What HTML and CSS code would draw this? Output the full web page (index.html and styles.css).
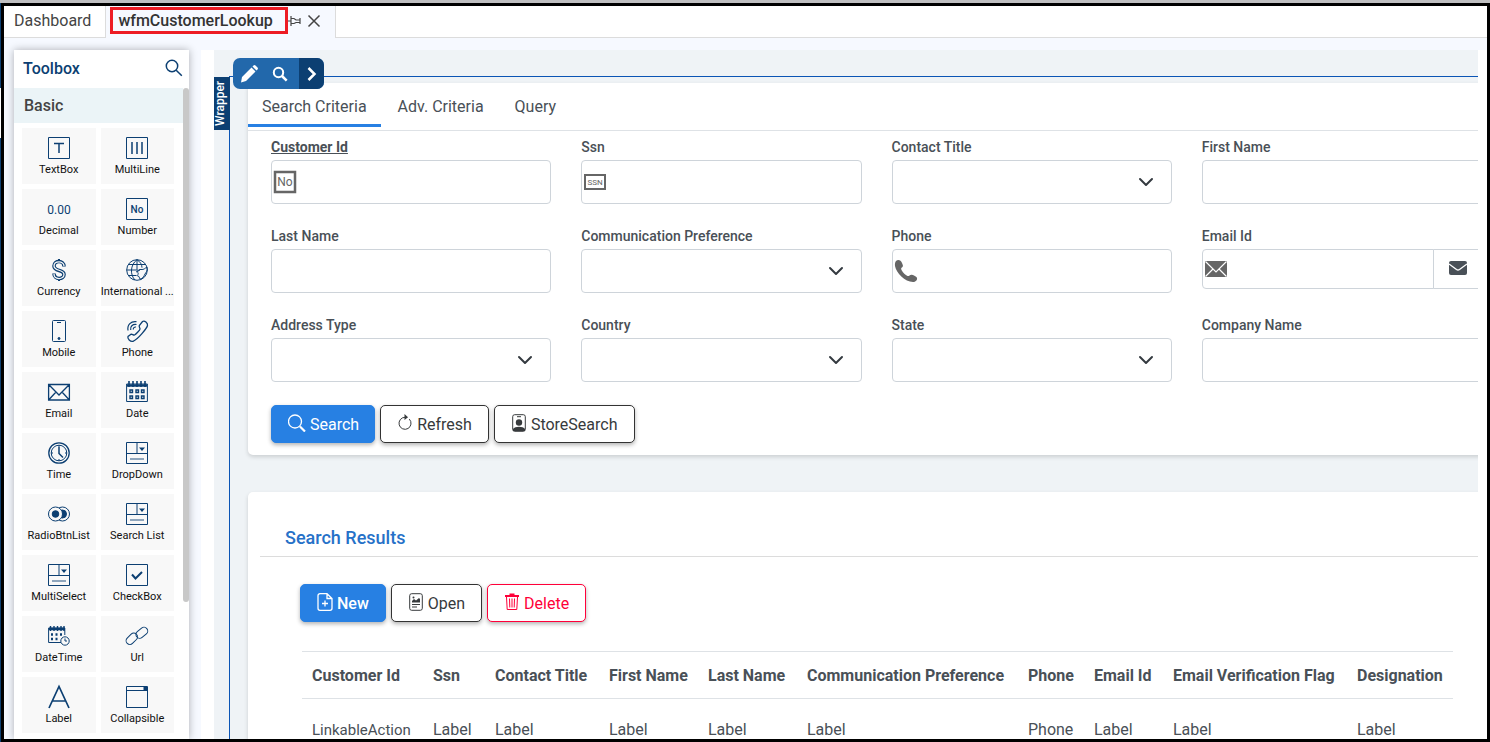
FILE: index.html
```html
<!DOCTYPE html>
<html lang="en">
<head>
    <meta charset="UTF-8">
    <meta name="viewport" content="width=device-width, initial-scale=1.0">
    <title>wfmCustomerLookup</title>
    <link rel="stylesheet" href="styles.css">
</head>
<body>
    <svg class="defs" aria-hidden="true">
        <symbol id="icon-dropdown" viewBox="0 0 22 22">
            <path d="M.5.5h21v21H.5zM.5 11.500h21M11 .5v11"/>
            <path d="M13 5.500h6l-3 3.500z" fill="currentColor" stroke="none"/>
            <path d="M4 17h14" stroke-width="1.500" opacity=".6"/>
        </symbol>
    </svg>

    <div class="app">
        <nav class="tabbar">
            <a class="doc-tab" href="#">Dashboard</a>
            <div class="doc-tab active">
                <a class="doc-name" href="#">wfmCustomerLookup</a>
                <button class="icon-btn" aria-label="Pin"><svg width="14" height="12" viewBox="0 0 14 12"><path d="M0 6h3M3 1v10M3 3.500h3l2 1.500h4V3M12 3v6M3 8.500h3l2-1h4" /></svg></button>
                <button class="icon-btn close" aria-label="Close"><svg width="14" height="14" viewBox="0 0 14 14"><path d="M1.500 1.500l11 11M12.500 1.500l-11 11"/></svg></button>
            </div>
        </nav>

        <div class="workspace">
            <aside class="toolbox">
                <div class="toolbox-header">
                    <h2>Toolbox</h2>
                    <button class="icon-btn" aria-label="Search toolbox"><svg width="18" height="18" viewBox="0 0 18 18"><circle cx="7" cy="7" r="5.700"/><path d="M11.200 11.200l5.600 5.600"/></svg></button>
                </div>
                <div class="toolbox-body">
                    <div class="toolbox-list">
                        <h3>Basic</h3>
                        <div class="tools">
                            <div class="tool"><svg viewBox="0 0 22 22"><path d="M.5.5h21v21H.5z"/><path d="M6 6.500h10M11 6.500V16" stroke-width="1.500"/></svg>TextBox</div>
                            <div class="tool"><svg viewBox="0 0 22 22"><path d="M.5.5h21v21H.5z"/><path d="M6 5v12M11 5v12M16 5v12" stroke-width="1.500"/></svg>MultiLine</div>
                            <div class="tool"><svg viewBox="0 0 22 22"><text x="11" y="16" class="num">0.00</text></svg>Decimal</div>
                            <div class="tool"><svg viewBox="0 0 22 22"><path d="M.5.5h21v21H.5z"/><text x="11" y="15" class="no">No</text></svg>Number</div>
                            <div class="tool"><svg viewBox="0 0 22 22"><path d="M11 0v3M11 19v3" stroke-width="2"/><path d="M16 7.500C16 1 6 1 6 7s10 3 10 8.500S6 21 6 14.500" stroke-width="3.600"/><path d="M16 7C16 1.500 6 1.500 6 7s10 3 10 8.500S6 21 6 15" stroke="#f8f8f8" stroke-width="1.300"/></svg>Currency</div>
                            <div class="tool"><svg viewBox="0 0 22 22"><circle cx="11" cy="11" r="10.300"/><path d="M11 .7v10M.7 11h11M2.500 5.500h17M2.500 16.500h8M11 .7C4 6 4 16 9 21M11 .7c3 2 5 4.500 5 8"/><path d="M21 8c-2 1-3 3-6 2.500s-4 2-3 3.500-2 3 0 3 1 4 3 3 3-3 4-5 3-3 2-7zM10 13l4-2"/></svg><span>International ...</span></div>
                            <div class="tool"><svg viewBox="0 0 22 22"><rect x="4.500" y=".5" width="13" height="21" rx="1"/><path d="M9 2.500h4"/><circle cx="11" cy="18.500" r="1" fill="currentColor"/></svg>Mobile</div>
                            <div class="tool"><svg viewBox="0 0 22 22"><path d="M16.500 1.500c2-1.500 5.500 1.500 5 4S12 19.500 7 21.300c-2.500.7-6-2.500-5-4.800l3-2.300c1-.5 2.500 1.300 3.500.8s5.500-5 5.500-6-1.200-2-.7-3.500z" stroke-width="1.300"/><path d="M2 10.500C1 5 5 .8 10.500 1.700M4.700 10C4 6.500 6.500 4 10.500 4.500M7.300 9.500c-.2-1.500 1-2.700 2.700-2.500" stroke-width="1.200"/></svg>Phone</div>
                            <div class="tool"><svg viewBox="0 0 22 22"><path d="M.6 3.500h20.800v15.500H.6zM.6 3.500L11 14 21.400 3.500M.6 19l7.400-8M21.400 19L14 11" stroke-width="1.300"/></svg>Email</div>
                            <div class="tool"><svg viewBox="0 0 22 22"><path d="M.6 3h20.800v17.500H.6z"/><path d="M1 4.500h20" stroke-width="2.500"/><path d="M3 0v6M7 0v6M11 0v6M15 0v6M19 0v6" stroke-width="1.600"/><path d="M4 9h2.500v2.500H4zM10 9h2.500v2.500H10zM15.500 9H18v2.500h-2.500zM4 15h2.500v2.500H4zM10 15h2.500v2.500H10zM15.500 15H18v2.500h-2.500z" stroke-width="1.400"/></svg>Date</div>
                            <div class="tool"><svg viewBox="0 0 22 22"><circle cx="11" cy="11" r="10.200" stroke-width="1.300"/><circle cx="11" cy="11" r="7.800"/><path d="M11 5v6.500l4 4" stroke-width="1.500"/><path d="M11 3v2M3 11h2M17 11h2M11 17v2"/></svg>Time</div>
                            <div class="tool"><svg><use href="#icon-dropdown"/></svg>DropDown</div>
                            <div class="tool"><svg viewBox="0 0 22 22"><circle cx="14.500" cy="11" r="7"/><circle cx="14.500" cy="11" r="4" fill="currentColor"/><circle cx="7.500" cy="11" r="7" fill="#f8f8f8"/><circle cx="7.500" cy="11" r="3.300" fill="currentColor"/></svg>RadioBtnList</div>
                            <div class="tool"><svg><use href="#icon-dropdown"/></svg>Search List</div>
                            <div class="tool"><svg><use href="#icon-dropdown"/></svg>MultiSelect</div>
                            <div class="tool"><svg viewBox="0 0 22 22"><path d="M.5.5h21v21H.5z"/><path d="M6 10.500l3.500 4L16 8" stroke-width="2"/></svg>CheckBox</div>
                            <div class="tool"><svg viewBox="0 0 22 22"><path d="M13 17.500H.6V3h16.200v7"/><path d="M1 4h16" stroke-width="2.500"/><path d="M2.500 1v5M6 1v5M9.500 1v5M13 1v5M16 1v5" stroke-width="1.400"/><path d="M3 9.500h2M7.500 9.500h2M12 9.500h2M3 14h2M7.500 14h2" stroke-width="2.500"/><circle cx="17" cy="16" r="4.200"/><path d="M17 13.500V16h2"/></svg>DateTime</div>
                            <div class="tool"><svg viewBox="0 0 22 22"><rect x="-.5" y="10" width="13" height="7.500" rx="3.700" transform="rotate(-45 6 14)"/><rect x="9.500" y="4" width="13" height="7.500" rx="3.700" transform="rotate(-40 16 8)"/></svg>Url</div>
                            <div class="tool"><svg viewBox="0 0 22 22"><path d="M1 22L11 .5 21 22M4.500 15h13" stroke-width="1.700"/></svg>Label</div>
                            <div class="tool"><svg viewBox="0 0 22 22"><path d="M.5.5h21v21H.5zM.5 4.500h21"/><path d="M18 1h3v3h-3z" fill="currentColor"/></svg>Collapsible</div>
                        </div>
                    </div>
                    <div class="scroll-track"><div class="scroll-thumb"></div></div>
                </div>
            </aside>

            <main class="designer">
                <div class="canvas">
                    <div class="wrapper">
                        <div class="wrapper-tag">Wrapper</div>
                        <div class="wrapper-tools">
                            <button aria-label="Edit"><svg width="18" height="18" viewBox="0 0 18 18"><path d="M12.500 1.500l1-1a1.500 1.500 0 0 1 2 0l2 2a1.500 1.500 0 0 1 0 2l-1 1zM11.500 2.500l4 4L6 16 1 17.500 2 12z" fill="#fff"/></svg></button>
                            <button aria-label="Inspect"><svg width="16" height="16" viewBox="0 0 16 16" fill="none" stroke="#fff"><circle cx="6.500" cy="6.500" r="4.700" stroke-width="2"/><path d="M10 10l4.700 4.700" stroke-width="2.500"/></svg></button>
                            <button class="next" aria-label="More"><svg width="12" height="16" viewBox="0 0 12 16" fill="none" stroke="#fff" stroke-width="2.500"><path d="M2.500 2l6 6-6 6"/></svg></button>
                        </div>

                        <section class="card">
                            <div class="criteria-tabs">
                                <a class="active" href="#">Search Criteria</a>
                                <a href="#">Adv. Criteria</a>
                                <a href="#">Query</a>
                            </div>
                            <form class="criteria">
                                <div class="fields">
                                    <div class="field">
                                        <label class="key" for="customer-id">Customer Id</label>
                                        <div class="control">
                                            <input type="text" id="customer-id">
                                            <svg class="field-icon" width="24" height="24" viewBox="0 0 24 24"><path d="M2 2h20v20H2z" fill="#fff" stroke="#666" stroke-width="2.500"/><text x="12" y="16" class="box-no">No</text></svg>
                                        </div>
                                    </div>
                                    <div class="field">
                                        <label for="ssn">Ssn</label>
                                        <div class="control">
                                            <input type="text" id="ssn">
                                            <svg class="field-icon" width="24" height="24" viewBox="0 0 24 24"><rect x="2" y="5" width="20" height="14" fill="#fff" stroke="#666" stroke-width="2"/><text x="12" y="15" class="box-ssn">SSN</text></svg>
                                        </div>
                                    </div>
                                    <div class="field">
                                        <label for="contact-title">Contact Title</label>
                                        <select id="contact-title"></select>
                                    </div>
                                    <div class="field">
                                        <label for="first-name">First Name</label>
                                        <input type="text" id="first-name">
                                    </div>
                                    <div class="field">
                                        <label for="last-name">Last Name</label>
                                        <input type="text" id="last-name">
                                    </div>
                                    <div class="field">
                                        <label for="comm-pref">Communication Preference</label>
                                        <select id="comm-pref"></select>
                                    </div>
                                    <div class="field">
                                        <label for="phone">Phone</label>
                                        <div class="control">
                                            <input type="text" id="phone">
                                            <svg class="field-icon" width="24" height="24" viewBox="0 0 24 24"><path d="M2 2c2-2 5-1 6 2 .7 2 1.500 2.500.5 4-1 1-2 1-1 3 1.500 3 4 5 6 6 1.500.5 2-1 4-1.300 1 0 5 1.300 5.500 3.300s-1.500 4-4 4C11 23 2 13.500 1 7c-.2-2 0-4 1-5z" fill="#666"/></svg>
                                        </div>
                                    </div>
                                    <div class="field">
                                        <label for="email-id">Email Id</label>
                                        <div class="control email">
                                            <input type="email" id="email-id">
                                            <button type="button" aria-label="Send email"><svg width="18" height="14" viewBox="0 0 18 14"><path d="M2 0h14a2 2 0 0 1 2 2v10a2 2 0 0 1-2 2H2a2 2 0 0 1-2-2V2a2 2 0 0 1 2-2z" fill="#495057"/><path d="M0 3l7.500 5.500q1.500 1 3 0L18 3" fill="none" stroke="#fff" stroke-width="1.400"/></svg></button>
                                            <svg class="field-icon" width="24" height="24" viewBox="0 0 24 24"><path d="M1 4h22v16H1z" fill="#666"/><path d="M1.500 4.500L12 15 22.500 4.500M1.500 19.500L9 12M22.500 19.500L15 12" fill="none" stroke="#fff" stroke-width="1.200"/></svg>
                                        </div>
                                    </div>
                                    <div class="field">
                                        <label for="address-type">Address Type</label>
                                        <select id="address-type"></select>
                                    </div>
                                    <div class="field">
                                        <label for="country">Country</label>
                                        <select id="country"></select>
                                    </div>
                                    <div class="field">
                                        <label for="state">State</label>
                                        <select id="state"></select>
                                    </div>
                                    <div class="field">
                                        <label for="company-name">Company Name</label>
                                        <input type="text" id="company-name">
                                    </div>
                                </div>
                                <div class="actions">
                                    <button type="button" class="btn primary"><svg width="18" height="18" viewBox="0 0 18 18"><circle cx="7" cy="7.500" r="6.500" stroke-width="1.300"/><path d="M12 12.500l5 5" stroke-width="2.200"/></svg>Search</button>
                                    <button type="button" class="btn"><svg width="16" height="18" viewBox="0 0 16 18"><path d="M8 3.300a6 6 0 1 0 4.300 1.800"/><path d="M7.500 0l3.500 3.200L7.500 6z" fill="currentColor" stroke="none"/></svg>Refresh</button>
                                    <button type="button" class="btn"><svg width="16" height="18" viewBox="0 0 16 18"><rect x="1.700" y=".7" width="12.600" height="16.600" rx="2"/><path d="M6 2.700h4"/><circle cx="8" cy="8.500" r="3.200" fill="currentColor" stroke="none"/><path d="M2 16v-1c2-3 10-3 12 0v2H2z" fill="currentColor" stroke="none"/></svg>StoreSearch</button>
                                </div>
                            </form>
                        </section>

                        <section class="card results">
                            <h2>Search Results</h2>
                            <div class="actions">
                                <button type="button" class="btn primary new"><svg width="16" height="18" viewBox="0 0 16 18"><path d="M10 .7H3a2 2 0 0 0-2 2v12.600a2 2 0 0 0 2 2h10a2 2 0 0 0 2-2V5.500zM10 .7v4.800h5M8 7.500v6M5 10.500h6" stroke-width="1.300"/></svg>New</button>
                                <button type="button" class="btn"><svg width="16" height="18" viewBox="0 0 16 18"><rect x="1.700" y=".7" width="12.600" height="16.600" rx="2"/><path d="M4 9.500V8l2-2 2 1.500L11 5l1 1v3.500z" fill="currentColor" stroke="none"/><circle cx="5.500" cy="4.500" r="1" fill="currentColor" stroke="none"/><path d="M4 11.500h8M4 14h5"/></svg>Open</button>
                                <button type="button" class="btn danger"><svg width="16" height="18" viewBox="0 0 16 18"><path d="M1 2h4.500V.5h5V2H15v2H1z" fill="currentColor" stroke="none"/><path d="M2.500 4l.7 12.500h9.600L13.500 4M5.500 5.500l.3 9M8 5.500v9M10.500 5.500l-.3 9"/></svg>Delete</button>
                            </div>
                            <table>
                                <colgroup>
                                    <col class="col-id">
                                    <col class="col-ssn">
                                    <col class="col-title">
                                    <col class="col-name">
                                    <col class="col-name">
                                    <col class="col-pref">
                                    <col class="col-phone">
                                    <col class="col-email">
                                    <col class="col-flag">
                                    <col>
                                </colgroup>
                                <thead>
                                    <tr>
                                        <th>Customer Id</th>
                                        <th>Ssn</th>
                                        <th>Contact Title</th>
                                        <th>First Name</th>
                                        <th>Last Name</th>
                                        <th>Communication Preference</th>
                                        <th>Phone</th>
                                        <th>Email Id</th>
                                        <th>Email Verification Flag</th>
                                        <th>Designation</th>
                                    </tr>
                                </thead>
                                <tbody>
                                    <tr>
                                        <td><a class="cell-link" href="#">LinkableAction</a></td>
                                        <td>Label</td>
                                        <td>Label</td>
                                        <td>Label</td>
                                        <td>Label</td>
                                        <td>Label</td>
                                        <td>Phone</td>
                                        <td>Label</td>
                                        <td>Label</td>
                                        <td>Label</td>
                                    </tr>
                                </tbody>
                            </table>
                        </section>
                    </div>
                </div>
            </main>
        </div>
    </div>
</body>
</html>
```
FILE: styles.css
```css
* {
    margin: 0;
    padding: 0;
    box-sizing: border-box;
}

body {
    height: 100vh;
    padding: 3px 0 0 1px;
    overflow: hidden;
    background: linear-gradient(#bfbfc1, #bfbfc1) top / 100% 3px no-repeat,
        linear-gradient(#0c3f72 88px, #fff 88px, #fff 138px, #0c3f72 138px);
    font-family: Roboto, "Liberation Sans", sans-serif;
    font-size: 16px;
    color: #495057;
}

a {
    color: inherit;
    text-decoration: none;
}

button,
input,
select {
    font: inherit;
}

.defs {
    display: none;
}

.app {
    display: flex;
    flex-direction: column;
    height: 100%;
    border: 3px solid #000;
    background: #f6f9ff;
    overflow: hidden;
}

/* document tabs */
.tabbar {
    display: flex;
    flex: none;
    height: 32px;
    background: linear-gradient(#dcdcdc, #dcdcdc) bottom / 100% 1px no-repeat #fff;
}

.doc-tab {
    display: flex;
    align-items: center;
    padding: 0 14px 3px 10px;
    border-right: 1px solid #dcdcdc;
    color: #444;
}

.doc-tab.active {
    padding: 0 14px 3px 4px;
    background: #f6f9ff;
}

.doc-name {
    padding: 0 12px 0 5px;
    border: 3px solid #ed1c24;
    line-height: 21px;
    font-weight: 500;
    color: #333;
}

.icon-btn {
    display: flex;
    background: none;
    border: 0;
    color: #444;
}

.icon-btn svg {
    fill: none;
    stroke: currentColor;
    stroke-width: 1.2;
}

.icon-btn.close {
    margin-left: 5px;
}

.icon-btn.close svg {
    stroke-width: 1.5;
}

.workspace {
    display: flex;
    flex: 1;
    min-height: 0;
    padding: 12px 0 0 10px;
}

/* toolbox */
.toolbox {
    display: flex;
    flex-direction: column;
    flex: none;
    width: 175px;
    margin-right: 12px;
    background: #fff;
    box-shadow: 0 0 8px rgba(0, 0, 0, 0.3);
}

.toolbox-header {
    display: flex;
    align-items: center;
    justify-content: space-between;
    flex: none;
    height: 38px;
    padding: 0 6px 2px 9px;
}

.toolbox-header h2,
.toolbox h3 {
    font-size: 16px;
    font-weight: 500;
}

.toolbox-header h2,
.toolbox-header .icon-btn {
    color: #0c3f72;
}

.toolbox-header .icon-btn svg {
    stroke-width: 1.5;
}

.toolbox-body {
    display: flex;
    flex: 1;
    min-height: 0;
}

.toolbox-list {
    flex: 1;
    overflow: hidden;
}

.toolbox h3 {
    padding-left: 10px;
    line-height: 35px;
    background: #ebf4f7;
    color: #444;
}

.tools {
    display: grid;
    grid-template-columns: 1fr 1fr;
    gap: 5px;
    padding: 5px 9px 5px 8px;
}

.tool {
    display: flex;
    flex-direction: column;
    align-items: center;
    gap: 3px;
    min-width: 0;
    height: 56px;
    padding-top: 9px;
    background: #f8f8f8;
    font-size: 11px;
    line-height: 16px;
    white-space: nowrap;
    color: #111;
}

.tool svg {
    flex: none;
    width: 22px;
    height: 22px;
    overflow: visible;
    color: #0c3f72;
    fill: none;
    stroke: currentColor;
}

.tool text {
    fill: currentColor;
    stroke: none;
    text-anchor: middle;
}

.tool .num {
    font-size: 12px;
}

.tool .no {
    font-size: 10px;
    font-weight: 500;
}

.scroll-track {
    width: 6px;
}

.scroll-thumb {
    height: 79%;
    border-radius: 3px;
    background: #c8c8c8;
}

/* design surface */
.designer {
    flex: 1;
    min-width: 0;
    padding: 0 9px 0 13px;
    background: #fff;
}

.canvas {
    height: 100%;
    padding: 26px 0 0 15px;
    background: #eff3f6;
    overflow: hidden;
}

.wrapper {
    position: relative;
    height: 100%;
    padding: 6px 0 0 18px;
    border-top: 1px solid #0b55b5;
    border-left: 1px solid #0b55b5;
}

.wrapper-tag {
    position: absolute;
    top: 0;
    left: -16px;
    width: 16px;
    height: 53px;
    writing-mode: vertical-rl;
    transform: rotate(180deg);
    background: #0c3f72;
    color: #fff;
    font-size: 12px;
    font-weight: 500;
    line-height: 12px;
    text-align: center;
}

.wrapper-tools {
    position: absolute;
    top: -19px;
    left: 3px;
    display: flex;
    height: 31px;
    border-radius: 7px;
    background: #2268ab;
    overflow: hidden;
}

.wrapper-tools button {
    display: flex;
    align-items: center;
    justify-content: center;
    width: 31px;
    border: 0;
    background: none;
}

.wrapper-tools .next {
    width: 25px;
    margin-left: 4px;
    background: #0c3f72;
}

/* cards run past the edge of the surface */
.card {
    margin-right: -27px;
    border-radius: 5px;
    background: #fff;
    box-shadow: 0 2px 4px rgba(0, 0, 0, 0.15);
}

.criteria-tabs {
    display: flex;
    gap: 3px;
    height: 48px;
    border-bottom: 1px solid #dee2e6;
}

.criteria-tabs a {
    height: 44px;
    padding: 0 14px;
    border-bottom: 3px solid transparent;
    line-height: 48px;
}

.criteria-tabs .active {
    border-color: #2780e3;
}

.criteria {
    padding: 3px 23px 12px;
}

.fields {
    display: grid;
    grid-template-columns: repeat(4, 1fr);
    gap: 19px 30px;
}

.field {
    min-width: 0;
}

.field label {
    display: block;
    font-size: 14px;
    font-weight: 500;
    line-height: 26px;
}

.field .key {
    font-weight: 700;
    text-decoration: underline;
}

.field input,
.field select {
    display: block;
    width: 100%;
    height: 44px;
    padding: 0 28px;
    border: 1px solid #ced4da;
    border-radius: 4px;
    background: #fff;
}

.field select {
    appearance: none;
    background: url("data:image/svg+xml,%3Csvg xmlns='http://www.w3.org/2000/svg' viewBox='0 0 16 16'%3E%3Cpath fill='none' stroke='%23343a40' stroke-linecap='round' stroke-linejoin='round' stroke-width='2' d='M2 5l6 6 6-6'/%3E%3C/svg%3E") right 17px center / 16px no-repeat #fff;
}

.control {
    position: relative;
}

.field-icon {
    position: absolute;
    top: 50%;
    left: 2px;
    transform: translateY(-50%);
}

.field-icon text {
    fill: #666;
    text-anchor: middle;
}

.box-no {
    font-size: 12px;
}

.box-ssn {
    font-size: 8px;
}

.email {
    display: flex;
}

.control.email input {
    height: 40px;
    border-radius: 4px 0 0 4px;
}

.email button {
    flex: none;
    width: 49px;
    margin-left: -1px;
    border: 1px solid #ced4da;
    border-radius: 0 4px 4px 0;
    background: #fff;
}

/* buttons */
.actions {
    display: flex;
    gap: 5px;
}

.criteria .actions {
    margin-top: 23px;
}

.btn {
    display: flex;
    align-items: center;
    gap: 4px;
    height: 38px;
    padding: 0 16px;
    border: 1px solid #333;
    border-radius: 5px;
    background: #fff;
    box-shadow: 0 2px 4px rgba(0, 0, 0, 0.3);
    color: #373a3c;
}

.btn svg {
    fill: none;
    stroke: currentColor;
    margin-bottom: 3px;
}

.btn.primary {
    padding: 0 15px 0 16px;
    border-color: #2780e3;
    background: #2780e3;
    color: #fff;
}

.btn.new {
    padding: 0 16px;
    font-weight: 500;
}

.btn.danger {
    border-color: #ff0039;
    color: #ff0039;
}

/* results */
.results {
    margin-top: 37px;
    padding: 28px 0 40px 12px;
}

.results h2 {
    padding: 0 0 0 25px;
    border-bottom: 1px solid #dcdcdc;
    font-size: 18px;
    font-weight: 500;
    line-height: 36px;
    color: #2671c8;
}

.results .actions {
    margin: 27px 40px 29px;
}

.results table {
    table-layout: fixed;
    width: calc(100% - 94px);
    margin-left: 42px;
    border-collapse: collapse;
    border-top: 1px solid #dee2e6;
}

.col-id {
    width: 121px;
}

.col-ssn {
    width: 62px;
}

.col-title {
    width: 114px;
}

.col-name {
    width: 99px;
}

.col-pref {
    width: 221px;
}

.col-phone {
    width: 66px;
}

.col-email {
    width: 79px;
}

.col-flag {
    width: 184px;
}

.results th,
.results td {
    padding: 0 0 0 10px;
    text-align: left;
    white-space: nowrap;
}

.results th {
    height: 47px;
    border-bottom: 1px solid #dee2e6;
    font-weight: 700;
}

.results td {
    height: 62px;
}

.cell-link {
    font-size: 15px;
}
```
